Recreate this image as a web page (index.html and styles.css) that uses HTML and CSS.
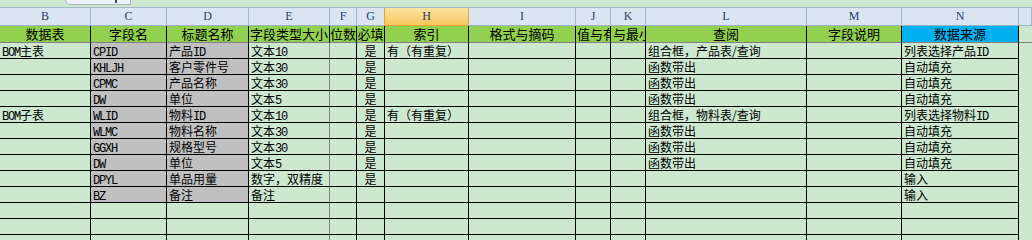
FILE: index.html
```html
<!DOCTYPE html>
<html lang="zh-CN">
<head>
<meta charset="utf-8">
<title>字段表</title>
<link rel="stylesheet" href="styles.css">
</head>
<body>
<div class="topbar"><div class="tab"><span class="tick"></span></div></div>
<div class="sheet">
  <div class="row hdr">
    <div class="h">B</div><div class="h">C</div><div class="h">D</div><div class="h">E</div><div class="h">F</div><div class="h">G</div><div class="h sel">H</div><div class="h">I</div><div class="h">J</div><div class="h">K</div><div class="h">L</div><div class="h">M</div><div class="h">N</div><div class="h last"></div>
  </div>
  <div class="row ttl">
    <div class="t">数据表</div><div class="t">字段名</div><div class="t">标题名称</div><div class="t">字段类型大小</div><div class="t">位数</div><div class="t">必填</div><div class="t">索引</div><div class="t">格式与摘码</div><div class="t clip">值与有</div><div class="t clip k">与最小</div><div class="t">查阅</div><div class="t">字段说明</div><div class="t blue">数据来源</div><div class="t last"></div>
  </div>

  <div class="row">
    <div class="c"><span class="en">BOM</span>主表</div><div class="c g"><span class="en">CPID</span></div><div class="c g">产品<span class="en">ID</span></div><div class="c e">文本<span class="en">10</span></div><div class="c"></div><div class="c ctr">是</div><div class="c">有（有重复）</div><div class="c"></div><div class="c"></div><div class="c"></div><div class="c">组合框，产品表/查询</div><div class="c"></div><div class="c">列表选择产品<span class="en">ID</span></div><div class="c last"></div>
  </div>
  <div class="row">
    <div class="c"></div><div class="c g"><span class="en">KHLJH</span></div><div class="c g">客户零件号</div><div class="c e">文本<span class="en">30</span></div><div class="c"></div><div class="c ctr">是</div><div class="c"></div><div class="c"></div><div class="c"></div><div class="c"></div><div class="c">函数带出</div><div class="c"></div><div class="c">自动填充</div><div class="c last"></div>
  </div>
  <div class="row">
    <div class="c"></div><div class="c g"><span class="en">CPMC</span></div><div class="c g">产品名称</div><div class="c e">文本<span class="en">30</span></div><div class="c"></div><div class="c ctr">是</div><div class="c"></div><div class="c"></div><div class="c"></div><div class="c"></div><div class="c">函数带出</div><div class="c"></div><div class="c">自动填充</div><div class="c last"></div>
  </div>
  <div class="row">
    <div class="c"></div><div class="c g"><span class="en">DW</span></div><div class="c g">单位</div><div class="c e">文本<span class="en">5</span></div><div class="c"></div><div class="c ctr">是</div><div class="c"></div><div class="c"></div><div class="c"></div><div class="c"></div><div class="c">函数带出</div><div class="c"></div><div class="c">自动填充</div><div class="c last"></div>
  </div>
  <div class="row">
    <div class="c"><span class="en">BOM</span>子表</div><div class="c g"><span class="en">WLID</span></div><div class="c g">物料<span class="en">ID</span></div><div class="c e">文本<span class="en">10</span></div><div class="c"></div><div class="c ctr">是</div><div class="c">有（有重复）</div><div class="c"></div><div class="c"></div><div class="c"></div><div class="c">组合框，物料表/查询</div><div class="c"></div><div class="c">列表选择物料<span class="en">ID</span></div><div class="c last"></div>
  </div>
  <div class="row">
    <div class="c"></div><div class="c g"><span class="en">WLMC</span></div><div class="c g">物料名称</div><div class="c e">文本<span class="en">30</span></div><div class="c"></div><div class="c ctr">是</div><div class="c"></div><div class="c"></div><div class="c"></div><div class="c"></div><div class="c">函数带出</div><div class="c"></div><div class="c">自动填充</div><div class="c last"></div>
  </div>
  <div class="row">
    <div class="c"></div><div class="c g"><span class="en">GGXH</span></div><div class="c g">规格型号</div><div class="c e">文本<span class="en">30</span></div><div class="c"></div><div class="c ctr">是</div><div class="c"></div><div class="c"></div><div class="c"></div><div class="c"></div><div class="c">函数带出</div><div class="c"></div><div class="c">自动填充</div><div class="c last"></div>
  </div>
  <div class="row">
    <div class="c"></div><div class="c g"><span class="en">DW</span></div><div class="c g">单位</div><div class="c e">文本<span class="en">5</span></div><div class="c"></div><div class="c ctr">是</div><div class="c"></div><div class="c"></div><div class="c"></div><div class="c"></div><div class="c">函数带出</div><div class="c"></div><div class="c">自动填充</div><div class="c last"></div>
  </div>
  <div class="row">
    <div class="c"></div><div class="c g"><span class="en">DPYL</span></div><div class="c g">单品用量</div><div class="c e">数字，双精度</div><div class="c"></div><div class="c ctr">是</div><div class="c"></div><div class="c"></div><div class="c"></div><div class="c"></div><div class="c"></div><div class="c"></div><div class="c">输入</div><div class="c last"></div>
  </div>
  <div class="row">
    <div class="c"></div><div class="c g"><span class="en">BZ</span></div><div class="c g">备注</div><div class="c e">备注</div><div class="c"></div><div class="c"></div><div class="c"></div><div class="c"></div><div class="c"></div><div class="c"></div><div class="c"></div><div class="c"></div><div class="c">输入</div><div class="c last"></div>
  </div>
  <div class="row">
    <div class="c"></div><div class="c"></div><div class="c"></div><div class="c e"></div><div class="c"></div><div class="c"></div><div class="c"></div><div class="c"></div><div class="c"></div><div class="c"></div><div class="c"></div><div class="c"></div><div class="c"></div><div class="c last"></div>
  </div>
  <div class="row">
    <div class="c"></div><div class="c"></div><div class="c"></div><div class="c e"></div><div class="c"></div><div class="c"></div><div class="c"></div><div class="c"></div><div class="c"></div><div class="c"></div><div class="c"></div><div class="c"></div><div class="c"></div><div class="c last"></div>
  </div>
  <div class="row">
    <div class="c"></div><div class="c"></div><div class="c"></div><div class="c e"></div><div class="c"></div><div class="c"></div><div class="c"></div><div class="c"></div><div class="c"></div><div class="c"></div><div class="c"></div><div class="c"></div><div class="c"></div><div class="c last"></div>
  </div>
</div>
</body>
</html>
```

FILE: styles.css
```css
html, body {
  margin: 0;
  padding: 0;
  width: 1032px;
  height: 240px;
  overflow: hidden;
  background: #cce8cf;
  font-family: "Noto Sans CJK SC", "Noto Sans", sans-serif;
  font-size: 12px;
  color: #000;
}

.topbar {
  height: 8px;
  box-sizing: border-box;
  background: #cce8cf;
  border-bottom: 1px solid #a9b8c6;
  padding-left: 65px;
}
.tab {
  width: 66px;
  height: 5px;
  box-sizing: border-box;
  background: #eef2f7;
  border: 1px solid #a7b4c2;
  border-top: none;
  border-radius: 0 0 0 5px;
  display: flex;
  justify-content: flex-end;
  padding-right: 13px;
}
.tick {
  width: 2px;
  height: 3px;
  background: #3a4a5a;
}

.sheet {
  display: flex;
  flex-direction: column;
}
.row {
  display: grid;
  grid-template-columns: 91px 76px 82px 81px 27px 28px 84px 107px 35px 35px 161px 95px 117px 1fr;
  grid-template-rows: 100%;
  height: 16px;
  flex: none;
}
.row > div {
  box-sizing: border-box;
  white-space: nowrap;
  min-height: 0;
}

/* column header row */
.hdr {
  height: 18px;
}
.h {
  background: #dbe5f1;
  border-right: 1px solid #a4b7cd;
  border-bottom: 1px solid #9cb0c8;
  font-family: "Liberation Serif", "DejaVu Serif", serif;
  font-size: 12px;
  color: #27406a;
  text-align: center;
  line-height: 17px;
}
.h.sel {
  background: linear-gradient(#fbe3a4, #f6c65d);
  border-right: 1px solid #e9a23a;
  border-bottom: 1px solid #e9a23a;
  border-left: 1px solid #e9a23a;
  margin-left: -1px;
}
.h.last {
  background: #dbe5f1;
}

/* title row */
.ttl {
  height: 17px;
}
.t {
  background: #92d050;
  border-right: 1px solid #000;
  border-bottom: 1px solid #7f7f7f;
  text-align: center;
  font-size: 13px;
  line-height: 16px;
}
.t.clip {
  text-align: left;
  padding-left: 1px;
  overflow: hidden;
}
.t.k {
  padding-left: 2px;
}
.t.blue {
  background: #00b0f0;
}
.t.last {
  background: #cce8cf;
  border-right: none;
}

/* data rows */
.c {
  background: #cce8cf;
  border-right: 1px solid #000;
  border-bottom: 1px solid #000;
  padding-left: 2px;
  line-height: 15px;
}
.c.e {
  border-right-color: #808080;
}
.c.g {
  background: #c0c0c0;
}
.c.ctr {
  text-align: center;
  padding-left: 0;
}
.c.last {
  border: none;
}
.en {
  font-family: "Liberation Mono", "DejaVu Sans Mono", monospace;
  font-size: 12px;
  letter-spacing: -1.2px;
  line-height: 12px;
}
```
